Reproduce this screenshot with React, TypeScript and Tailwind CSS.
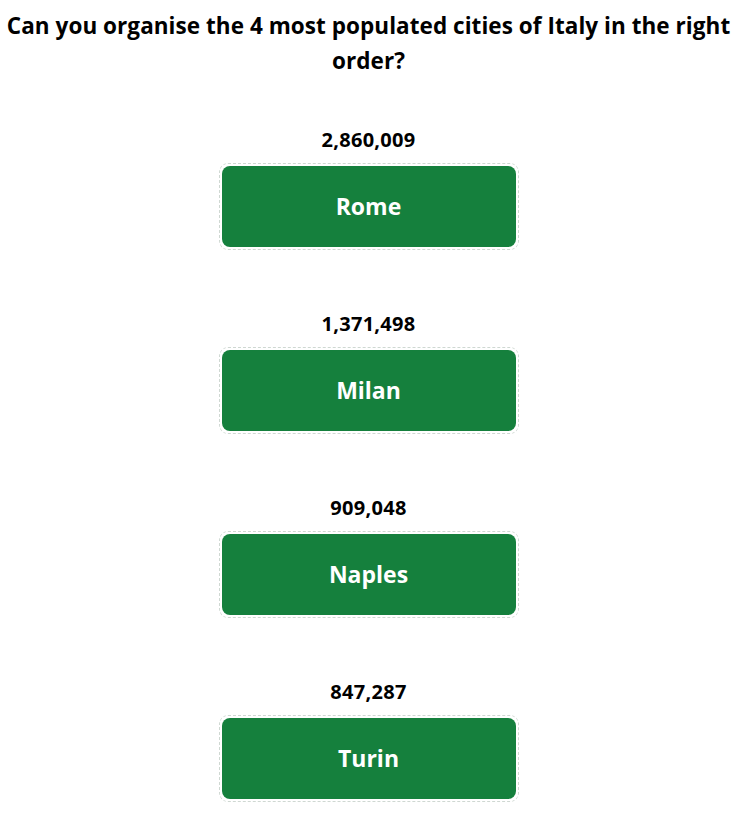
import React from "react";

const items = [
  { pop: "2,860,009", city: "Rome" },
  { pop: "1,371,498", city: "Milan" },
  { pop: "909,048", city: "Naples" },
  { pop: "847,287", city: "Turin" },
];

export default function App() {
  return (
    <div
      className="w-[737px] min-h-[815px] bg-white text-black flex flex-col items-center"
      style={{ fontFamily: '"Open Sans", "Noto Sans", sans-serif' }}
    >
      <h2 className="pt-2 text-center text-[22.5px] leading-[35px] font-bold tracking-[0.05px]">
        Can you organise the 4 most populated cities of Italy in the right order?
      </h2>
      <div className="mt-[50px] flex flex-col items-center gap-[62px]">
        {items.map((it) => (
          <div key={it.city} className="flex flex-col items-center">
            <div className="text-[20px] leading-[24px] font-bold mb-[11px] tracking-[0.3px]">{it.pop}</div>
            <div className="w-[300px] h-[87px] border border-dashed border-[#cfd8d2] rounded-[9px] p-[2px]">
              <div className="h-full w-full rounded-[8px] bg-[#15803d] flex items-center justify-center text-white text-[23px] font-bold">
                {it.city}
              </div>
            </div>
          </div>
        ))}
      </div>
    </div>
  );
}
